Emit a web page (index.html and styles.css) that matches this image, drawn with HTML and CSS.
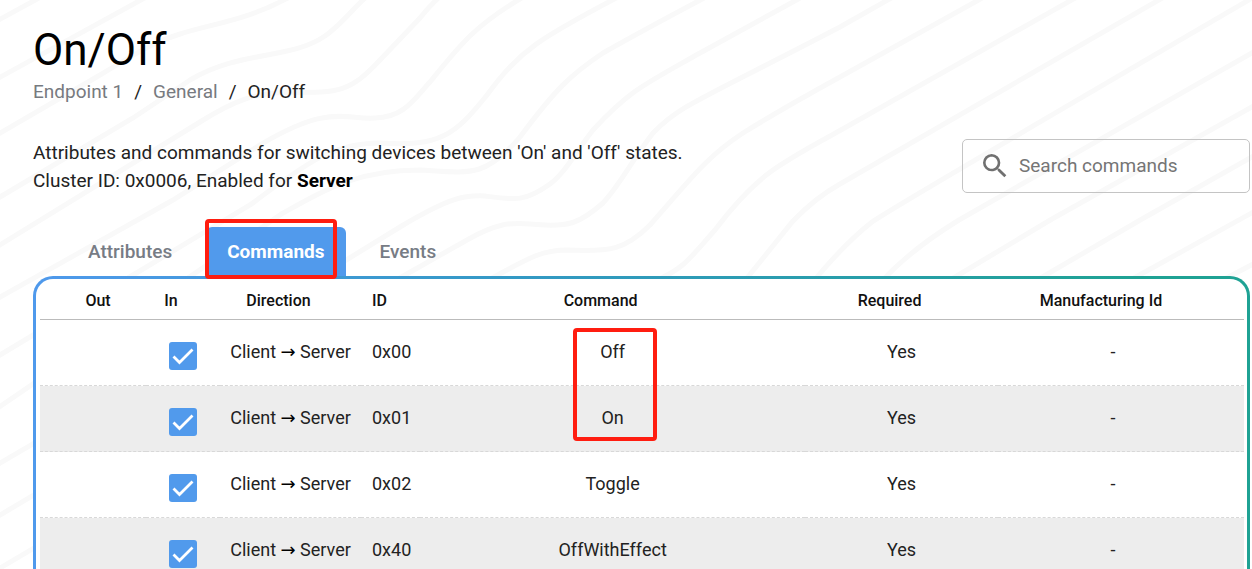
FILE: index.html
```html
<!DOCTYPE html>
<html lang="en">
<head>
  <meta charset="UTF-8" />
  <meta name="viewport" content="width=device-width, initial-scale=1.0"/>
  <title>On/Off</title>
  <link rel="stylesheet" href="styles.css">
</head>
<body>
  <svg class="waves" width="1252" height="569" viewBox="0 0 1252 569" aria-hidden="true">
    <path d="M-5 22 L50 -8" />
    <path d="M-5 80 L150 -5" />
    <path d="M-5 136 L100 75 C145 48 155 42 180 34 C215 23 250 20 295 -6" />
    <path d="M-5 200 L133 118 L190 80 C240 50 290 60 325 36 C345 22 355 5 370 -6" />
    <path d="M-5 248 L200 122 C235 100 255 93 290 92 C340 93 350 92 380 60 L420 18 Q432 3 442 -5" />
    <path d="M-5 300 L173 200 L260 145 C330 103 345 120 375 118 C405 117 415 98 430 82 C460 45 475 25 525 -4" />
    <path d="M-5 358 L133 275 L250 205 C310 160 335 143 380 143 C440 147 455 135 487 95 C520 50 540 38 620 -4" />
    <path d="M-5 410 L283 213 C330 187 360 170 420 170 C470 173 485 178 520 137 C555 90 570 75 603 53 Q640 32 706 -3" />
    <path d="M-5 466 L330 270 L400 227 C450 197 465 195 485 196 C515 200 525 202 550 184 C565 173 575 153 593 130 C630 90 645 84 700 53 L802 -3" />
    <path d="M-5 518 L405 275 L467 240 C495 224 510 222 530 224 C570 228 580 223 603 203 C622 182 630 163 653 133 C680 105 700 100 840 27 L893 -3" />
    <path d="M-5 571 L485 282 C535 254 545 250 567 250 C610 252 625 250 650 225 C690 180 705 158 743 133 C780 110 820 88 840 77 L984 -3" />
    <path d="M655 281 C685 268 690 258 715 230 Q745 190 773 170 Q795 155 832 135 L1077 -3" />
    <path d="M743 283 L793 221 Q815 198 840 184 L1164 -3" />
    <path d="M812 283 Q845 243 872 222 Q890 209 1254 -3" />
    <path d="M880 283 Q910 250 959 220 L1257 50" />
    <path d="M945 283 L1052 219 L1257 104" />
    <path d="M1032 283 L1142 219 L1257 154" />
    <path d="M1125 283 L1257 210" />
    <path d="M1217 283 L1257 262" />
  </svg>

  <main class="container">
    <h1>On/Off</h1>
    <nav class="breadcrumbs" aria-label="Breadcrumb">
      <a href="#">Endpoint 1</a>
      <span>/</span>
      <a href="#">General</a>
      <span>/</span>
      <span>On/Off</span>
    </nav>

    <div class="intro">
      <div class="description">
        <div>Attributes and commands for switching devices between 'On' and 'Off' states.</div>
        <div>Cluster ID: 0x0006, Enabled for <b>Server</b></div>
      </div>
      <label class="search">
        <svg width="32" height="32" viewBox="0 0 24 24" aria-hidden="true">
          <path d="M15.5 14h-.79l-.28-.27A6.471 6.471 0 0 0 16 9.5 6.5 6.5 0 1 0 9.5 16c1.61 0 3.09-.59 4.23-1.57l.27.28v.79l5 4.99L20.49 19l-4.99-5zm-6 0C7.01 14 5 11.99 5 9.5S7.01 5 9.5 5 14 7.01 14 9.5 11.99 14 9.5 14z" />
        </svg>
        <input type="search" placeholder="Search commands" aria-label="Search commands" />
      </label>
    </div>

    <div class="tabs">
      <button type="button">Attributes</button>
      <button type="button" class="active">Commands<span class="mark mark-tab"></span></button>
      <button type="button">Events</button>
    </div>

    <div class="panel">
      <table>
        <colgroup>
          <col class="col-out" />
          <col class="col-in" />
          <col class="col-direction" />
          <col class="col-id" />
          <col class="col-command" />
          <col class="col-required" />
          <col />
        </colgroup>
        <thead>
          <tr>
            <th>Out</th>
            <th>In</th>
            <th>Direction</th>
            <th>ID</th>
            <th>Command</th>
            <th>Required</th>
            <th>Manufacturing Id</th>
          </tr>
        </thead>
        <tbody>
          <tr>
            <td></td>
            <td><input type="checkbox" aria-label="Off in" checked /></td>
            <td>Client <span class="arrow">→</span> Server</td>
            <td>0x00</td>
            <td>Off<span class="mark mark-cells"></span></td>
            <td>Yes</td>
            <td>-</td>
          </tr>
          <tr>
            <td></td>
            <td><input type="checkbox" aria-label="On in" checked /></td>
            <td>Client <span class="arrow">→</span> Server</td>
            <td>0x01</td>
            <td>On</td>
            <td>Yes</td>
            <td>-</td>
          </tr>
          <tr>
            <td></td>
            <td><input type="checkbox" aria-label="Toggle in" checked /></td>
            <td>Client <span class="arrow">→</span> Server</td>
            <td>0x02</td>
            <td>Toggle</td>
            <td>Yes</td>
            <td>-</td>
          </tr>
          <tr>
            <td></td>
            <td><input type="checkbox" aria-label="OffWithEffect in" checked /></td>
            <td>Client <span class="arrow">→</span> Server</td>
            <td>0x40</td>
            <td>OffWithEffect</td>
            <td>Yes</td>
            <td>-</td>
          </tr>
        </tbody>
      </table>
    </div>
  </main>
</body>
</html>
```
FILE: styles.css
```css
* {
  box-sizing: border-box;
}

body {
  margin: 0;
  height: 100vh;
  overflow: hidden;
  font-family: Roboto, "Liberation Sans", sans-serif;
  font-size: 19px;
  line-height: 28px;
  color: #222;
  background-color: #fff;
}

.waves {
  position: absolute;
  top: 0;
  left: 0;
  z-index: -1;
  fill: none;
  stroke: #f9f9f9;
  stroke-width: 5;
}

.container {
  padding: 22px 2px 0 33px;
}

h1 {
  margin: 0;
  font-size: 44px;
  line-height: 56px;
  font-weight: 400;
  color: #000;
}

.breadcrumbs {
  display: flex;
  gap: 11px;
  line-height: 27px;
}

.breadcrumbs a {
  color: #777a80;
  text-decoration: none;
}

.intro {
  display: flex;
  justify-content: space-between;
  margin-top: 34px;
}

.description b {
  color: #000;
}

.search {
  display: flex;
  align-items: center;
  gap: 8px;
  width: 288px;
  height: 54px;
  padding: 0 16px;
  border: 1px solid #c4c4c4;
  border-radius: 5px;
}

.search svg {
  flex: none;
  fill: #707070;
}

.search input {
  flex: 1;
  min-width: 0;
  padding: 0;
  border: none;
  outline: none;
  background: none;
  font: inherit;
}

.search input::placeholder {
  color: #757575;
}

.tabs {
  display: flex;
  gap: 13px;
  margin-top: 32px;
  padding-left: 34px;
}

.tabs button {
  position: relative;
  height: 49px;
  padding: 0 21px;
  border: none;
  border-radius: 6px 6px 0 0;
  background: none;
  font: inherit;
  font-weight: 500;
  color: #777c85;
  cursor: pointer;
}

.tabs button.active {
  background-color: #519aec;
  font-weight: 700;
  color: #fff;
}

.panel {
  border: 3px solid transparent;
  border-radius: 20px 20px 0 0;
  padding: 0 3px 0 4px;
  background: linear-gradient(#fff, #fff) padding-box,
    linear-gradient(to right, #4f99ec, #3399c4 40%, #1fa294 90%) border-box;
}

table {
  width: 100%;
  table-layout: fixed;
  border-collapse: separate;
  border-spacing: 0;
  font-size: 18px;
}

.col-out {
  width: 106px;
}

.col-in {
  width: 74px;
}

.col-direction {
  width: 141px;
}

.col-id {
  width: 59px;
}

.col-command {
  width: 32%;
}

.col-required {
  width: 16%;
}

th {
  height: 41px;
  padding: 3px 24px 0 0;
  border-bottom: 1px solid #bbb;
  font-size: 16px;
  font-weight: 500;
  text-align: center;
  white-space: nowrap;
  color: #111;
}

th:first-child {
  padding-left: 34px;
}

td {
  position: relative;
  height: 66px;
  padding: 0 0 2px;
  border-bottom: 1px dashed #d8d8d8;
  text-align: center;
  white-space: nowrap;
}

th:nth-child(4),
td:nth-child(4) {
  padding-left: 11px;
  text-align: left;
}

th:last-child {
  padding-right: 40px;
}

td:last-child {
  padding-right: 16px;
}

tbody tr:nth-child(even) {
  background-color: #ededed;
}

td:nth-child(2) {
  padding: 6px 0 0;
}

.arrow {
  font-family: "DejaVu Sans", sans-serif;
  line-height: 1;
  color: #000;
}

input[type="checkbox"] {
  display: block;
  appearance: none;
  width: 28px;
  height: 28px;
  margin: 0 auto;
  border-radius: 3px;
  background: #519aec;
  cursor: pointer;
}

input[type="checkbox"]:checked {
  background: #519aec url("data:image/svg+xml,%3Csvg xmlns='http://www.w3.org/2000/svg' viewBox='0 0 28 28'%3E%3Cpath d='M4.500 14.500l6 6L23.500 7.500' fill='none' stroke='white' stroke-width='2.800'/%3E%3C/svg%3E");
}

/* red highlight frames */
.mark {
  position: absolute;
  z-index: 1;
  border: 4px solid #ff1d10;
  border-radius: 4px;
  pointer-events: none;
}

.mark-tab {
  top: -8px;
  right: 9px;
  bottom: -3px;
  left: -1px;
}

.mark-cells {
  top: 8px;
  left: 50%;
  width: 84px;
  height: 113px;
  margin-left: -40px;
}
```
